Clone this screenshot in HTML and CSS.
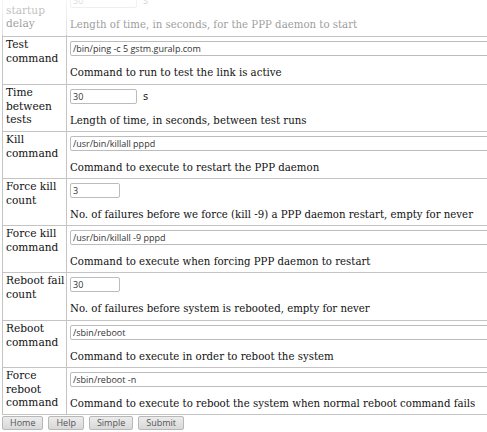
FILE: index.html
```html
<!DOCTYPE html>
<html>
<head>
<meta charset="utf-8">
<link rel="stylesheet" href="styles.css">
</head>
<body>
<div class="viewport">
  <div class="fade"></div>
  <table class="cfg">
    <tr class="r-first">
      <th>PPP startup delay</th>
      <td><div class="cell"><div class="field"><input class="in-num" value="30"> <span class="unit">s</span></div><div class="desc">Length of time, in seconds, for the PPP daemon to start</div></div></td>
    </tr>
    <tr class="r48">
      <th>Test command</th>
      <td><div class="cell"><div class="field"><input class="in-wide" value="/bin/ping -c 5 gstm.guralp.com"></div><div class="desc">Command to run to test the link is active</div></div></td>
    </tr>
    <tr>
      <th>Time between tests</th>
      <td><div class="cell"><div class="field"><input class="in-num" value="30"> <span class="unit">s</span></div><div class="desc">Length of time, in seconds, between test runs</div></div></td>
    </tr>
    <tr>
      <th>Kill command</th>
      <td><div class="cell"><div class="field"><input class="in-wide" value="/usr/bin/killall pppd"></div><div class="desc">Command to execute to restart the PPP daemon</div></div></td>
    </tr>
    <tr>
      <th>Force kill count</th>
      <td><div class="cell"><div class="field"><input class="in-small" value="3"></div><div class="desc">No. of failures before we force (kill -9) a PPP daemon restart, empty for never</div></div></td>
    </tr>
    <tr>
      <th>Force kill command</th>
      <td><div class="cell"><div class="field"><input class="in-wide" value="/usr/bin/killall -9 pppd"></div><div class="desc">Command to execute when forcing PPP daemon to restart</div></div></td>
    </tr>
    <tr class="r48">
      <th>Reboot fail count</th>
      <td><div class="cell"><div class="field"><input class="in-small" value="30"></div><div class="desc">No. of failures before system is rebooted, empty for never</div></div></td>
    </tr>
    <tr>
      <th>Reboot command</th>
      <td><div class="cell"><div class="field"><input class="in-wide" value="/sbin/reboot"></div><div class="desc">Command to execute in order to reboot the system</div></div></td>
    </tr>
    <tr>
      <th>Force reboot command</th>
      <td><div class="cell"><div class="field"><input class="in-wide" value="/sbin/reboot -n"></div><div class="desc">Command to execute to reboot the system when normal reboot command fails</div></div></td>
    </tr>
  </table>
  <div class="buttons">
    <button class="btn">Home</button>
    <button class="btn">Help</button>
    <button class="btn">Simple</button>
    <button class="btn">Submit</button>
  </div>
</div>
</body>
</html>
```
FILE: styles.css
```css
html, body {
  margin: 0;
  padding: 0;
  background: #fff;
}
.viewport {
  position: relative;
  width: 487px;
  height: 432px;
  overflow: hidden;
  padding-left: 2px;
  box-sizing: border-box;
}
.fade {
  position: absolute;
  left: 0;
  top: 0;
  width: 487px;
  height: 35px;
  background: linear-gradient(to bottom, rgba(255,255,255,0.85), rgba(255,255,255,0.45));
  z-index: 2;
}
.cfg {
  border-collapse: collapse;
  width: 620px;
  margin-top: -12px;
  font-family: "DejaVu Serif", serif;
  font-size: 10.6px;
  color: #111;
}
.cfg th, .cfg td {
  border: 1px solid #c4c4c4;
  vertical-align: top;
  padding: 0;
}
.cfg tr {
  height: 47px;
}
.cfg tr.r48 {
  height: 48px;
}
.cfg tr.r-first {
  height: 48px;
}
.cfg th {
  width: 59px;
  padding: 1px 1px 0 3px;
  text-align: left;
  font-weight: normal;
  line-height: 13.5px;
}
.cfg td {
  padding: 0 3px;
}
.cell {
  height: 46px;
  display: flex;
  flex-direction: column;
  justify-content: space-between;
  box-sizing: border-box;
  padding: 4px 0 4px 0;
}
.field {
  display: flex;
  align-items: center;
  gap: 6px;
  height: 15px;
}
.unit {
  font-family: "DejaVu Sans", sans-serif;
  font-size: 10px;
  color: #222;
}
input {
  box-sizing: border-box;
  height: 15px;
  margin: 0;
  padding: 0 2px;
  border: 1px solid #bcbcbc;
  border-radius: 2px;
  font-family: "Open Sans", sans-serif;
  font-size: 9px;
  color: #333;
  background: #fff;
}
.in-wide {
  width: 540px;
}
.in-num {
  width: 67px;
}
.in-small {
  width: 50px;
}
.desc {
  white-space: nowrap;
  line-height: 13px;
  font-size: 10.2px;
}
.buttons {
  display: flex;
  gap: 5px;
  padding-top: 1px;
}
.btn {
  height: 14px;
  margin: 0;
  padding: 0 7px;
  border: 1px solid #b8b8b8;
  border-radius: 2px;
  background: linear-gradient(to bottom, #ececec, #d8d8d8);
  font-family: "Open Sans", sans-serif;
  font-size: 9px;
  line-height: 12px;
  color: #555;
}
```
